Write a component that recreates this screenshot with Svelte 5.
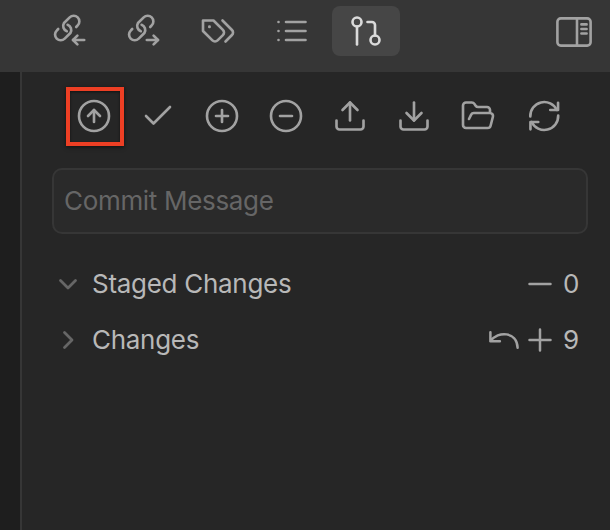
<script>
  const actions = [
    { name: 'Backup', marked: true, paths: ['M12 2a10 10 0 1 0 0 20a10 10 0 1 0 0-20z', 'M16 12l-4-4-4 4', 'M12 16V8'] },
    { name: 'Commit', paths: ['M20 6 9 17l-5-5'] },
    { name: 'Stage all', paths: ['M12 2a10 10 0 1 0 0 20a10 10 0 1 0 0-20z', 'M12 8v8', 'M8 12h8'] },
    { name: 'Unstage all', paths: ['M12 2a10 10 0 1 0 0 20a10 10 0 1 0 0-20z', 'M8 12h8'] },
    { name: 'Push', paths: ['M21 15v4a2 2 0 0 1-2 2H5a2 2 0 0 1-2-2v-4', 'M17 8l-5-5-5 5', 'M12 3v12'] },
    { name: 'Pull', paths: ['M21 15v4a2 2 0 0 1-2 2H5a2 2 0 0 1-2-2v-4', 'M7 10l5 5 5-5', 'M12 15V3'] },
    { name: 'Change layout', paths: ['M6 14l1.45-2.9A2 2 0 0 1 9.24 10H20a2 2 0 0 1 1.94 2.5l-1.55 6a2 2 0 0 1-1.94 1.5H4a2 2 0 0 1-2-2V5c0-1.1.9-2 2-2h3.93a2 2 0 0 1 1.66.9l.82 1.2a2 2 0 0 0 1.66.9H18a2 2 0 0 1 2 2v2'] },
    { name: 'Refresh', paths: ['M22.7 3.2V8h-5.2', 'M4.2 12.3A9.3 9.3 0 0 1 21.9 8', 'M4.3 20.9V16h5.2', 'M22.8 11.7A9.3 9.3 0 0 1 5.1 16'] }
  ];

  const chain = [
    'M24.2 14l1.5-1.6A5.6 5.6 0 0 0 17.7 4.4L12 10A5.6 5.6 0 0 0 14.8 18.2',
    'M6.2 16l-1.5 1.6A5.6 5.6 0 0 0 12.7 25.6L18.4 20A5.6 5.6 0 0 0 15.6 11.8'
  ];

  const tabs = [
    { name: 'Backlinks', box: 36, paths: [...chain, 'M32.2 27H21', 'M25.4 22.6L21 27l4.4 4.4'] },
    { name: 'Outgoing links', box: 36, paths: [...chain, 'M20.8 27H32', 'M27.6 22.6L32 27l-4.4 4.4'] },
    { name: 'Tags', box: 24, paths: ['M9 5H2v7l6.29 6.29c.94.94 2.48.94 3.42 0l3.58-3.58c.94-.94.94-2.48 0-3.42L9 5Z', 'M6.2 9.1h.2v.2h-.2z', 'M15 5l6.3 6.3a2.4 2.4 0 0 1 0 3.4L17 19'] },
    { name: 'Outline', box: 24, paths: ['M8 6h13', 'M8 12h13', 'M8 18h13', 'M3 6h.01', 'M3 12h.01', 'M3 18h.01'] },
    { name: 'Source control', box: 24, active: true, paths: ['M18 15a3 3 0 1 0 0 6a3 3 0 1 0 0-6z', 'M6 3a3 3 0 1 0 0 6a3 3 0 1 0 0-6z', 'M13 6h3a2 2 0 0 1 2 2v7', 'M6 9v12'] }
  ];
</script>

{#snippet icon(paths, box = 24)}
  <svg viewBox="0 0 {box} {box}" stroke-width={box * 0.073}>
    {#each paths as d}<path {d} />{/each}
  </svg>
{/snippet}

<div class="app">
  <header>
    <nav>
      {#each tabs as tab}
        <div class="tab" class:active={tab.active} aria-label={tab.name} role="button" tabindex="-1">
          {@render icon(tab.paths, tab.box)}
        </div>
      {/each}
    </nav>
    <svg class="sidebar" viewBox="0 0 36 36" stroke-width="2.6">
      <rect x="1.4" y="5.4" width="33.2" height="27.2" rx="3.4" />
      <path d="M21 5.4v27.2M25.4 11.4h5.2M25.4 16h5.2M25.4 20.5h5.2" />
    </svg>
  </header>

  <div class="body">
    <div class="gutter"></div>
    <main>
      <div class="toolbar">
        {#each actions as action}
          <div class="action" class:marked={action.marked} aria-label={action.name} role="button" tabindex="-1">
            {@render icon(action.paths)}
          </div>
        {/each}
      </div>

      <div class="message"><span>Commit Message</span></div>

      <section>
        <div class="row">
          <svg class="chevron" viewBox="0 0 20 20"><path d="M2.5 6.5l7.5 7.5 7.5-7.5" /></svg>
          <span class="title">Staged Changes</span>
          <svg class="tool" viewBox="0 0 36 36"><path d="M7.5 18h21" /></svg>
          <span class="count">0</span>
        </div>
        <div class="row">
          <svg class="chevron" viewBox="0 0 20 20"><path d="M6.5 2.5l7.5 7.5-7.5 7.5" /></svg>
          <span class="title">Changes</span>
          <svg class="tool" viewBox="0 0 36 36"><path d="M4.4 10.3v9h9.5M4.4 19.3C12 8.5 31 9.5 31.6 25.8" /></svg>
          <svg class="tool" viewBox="0 0 36 36"><path d="M7.5 18h21M18 7.5v21" /></svg>
          <span class="count">9</span>
        </div>
      </section>
    </main>
  </div>
</div>

<style>
  :global(body) {
    margin: 0;
    background: #262626;
  }
  .app {
    display: flex;
    flex-direction: column;
    width: 610px;
    height: 530px;
    overflow: hidden;
    background: #262626;
    color: #b8b8b8;
    font: 26px/32px Inter, "Liberation Sans", sans-serif;
  }
  svg {
    display: block;
    flex: none;
    width: 36px;
    height: 36px;
    fill: none;
    stroke: #a2a2a2;
    stroke-linecap: round;
    stroke-linejoin: round;
  }
  header {
    display: flex;
    justify-content: space-between;
    box-sizing: border-box;
    height: 72px;
    padding: 6px 18px 0 36px;
    background: #363636;
  }
  nav {
    display: flex;
    gap: 6px;
  }
  .tab {
    display: flex;
    align-items: center;
    justify-content: center;
    width: 68px;
    height: 50px;
    border-radius: 8px;
  }
  .active {
    background: #464646;
  }
  .active svg {
    stroke: #dadada;
  }
  .sidebar {
    margin-top: 7px;
  }
  .body {
    display: flex;
    flex: 1;
  }
  .gutter {
    width: 20px;
    background: #1e1e1e;
    border-right: 2px solid #363636;
  }
  main {
    flex: 1;
    padding: 15px 22px 0 30px;
  }
  .toolbar {
    display: flex;
    gap: 6px;
    padding-left: 14px;
  }
  .action {
    box-sizing: border-box;
    width: 58px;
    height: 59px;
    padding: 7px 0 0 6px;
    border: 4px solid transparent;
  }
  .marked {
    border-color: #ed3f24;
    box-shadow: 0 1px 4px #0009, inset 0 1px 3px #0008;
  }
  .message {
    display: flex;
    align-items: center;
    box-sizing: border-box;
    height: 66px;
    margin-top: 22px;
    padding-left: 10px;
    border: 2px solid #363636;
    border-radius: 10px;
    background: #2a2a2a;
    color: #666;
    letter-spacing: -0.32px;
  }
  section {
    padding: 22px 9px 0 6px;
  }
  .row {
    display: flex;
    align-items: center;
    height: 56px;
  }
  .chevron {
    width: 20px;
    height: 20px;
    margin-right: 14px;
    stroke: #666;
    stroke-width: 2.8;
  }
  .title {
    flex: 1;
    letter-spacing: -0.29px;
  }
  .tool {
    stroke-width: 2.5;
  }
  .count {
    width: 16px;
    margin-left: 5px;
    text-align: center;
  }
</style>
